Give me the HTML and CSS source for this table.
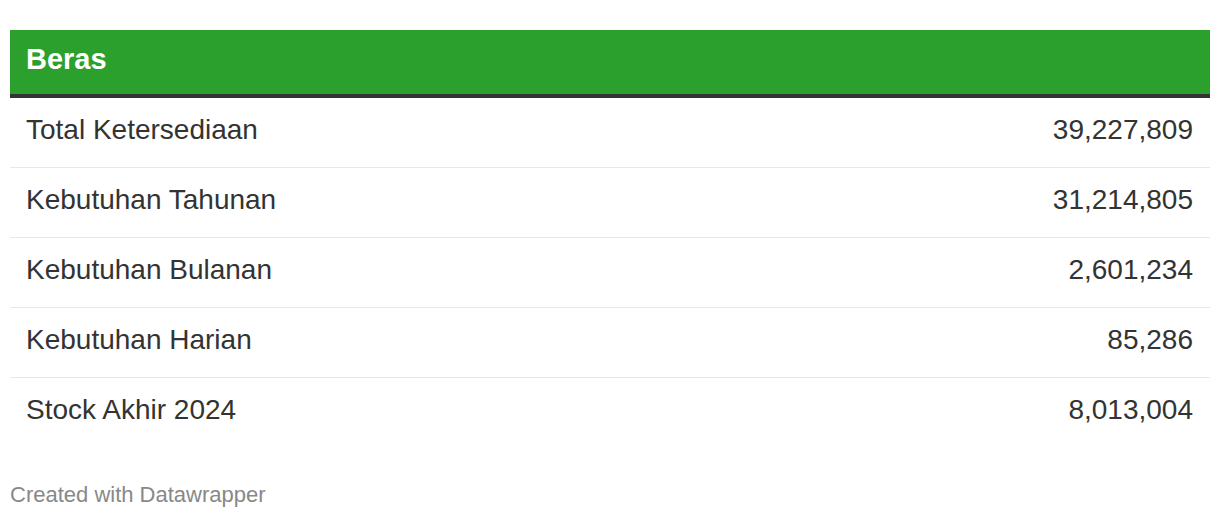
FILE: index.html
```html
<!DOCTYPE html>
<html>
<head>
<meta charset="utf-8">
<link rel="stylesheet" href="styles.css">
</head>
<body>
<div class="chart">
  <div class="table">
    <div class="head">Beras</div>
    <div class="row"><span>Total Ketersediaan</span><span>39,227,809</span></div>
    <div class="row"><span>Kebutuhan Tahunan</span><span>31,214,805</span></div>
    <div class="row"><span>Kebutuhan Bulanan</span><span>2,601,234</span></div>
    <div class="row"><span>Kebutuhan Harian</span><span>85,286</span></div>
    <div class="row last"><span>Stock Akhir 2024</span><span>8,013,004</span></div>
  </div>
  <div class="footer">Created with Datawrapper</div>
</div>
</body>
</html>
```
FILE: styles.css
```css
html, body {
  margin: 0;
  padding: 0;
  background: #fff;
}
.chart {
  padding: 30px 10px 0;
  font-family: "Liberation Sans", Arial, sans-serif;
  color: #333;
}
.table {
  display: flex;
  flex-direction: column;
}
.head {
  background: #2ca02c;
  color: #fff;
  font-weight: bold;
  font-size: 29px;
  height: 64px;
  line-height: 58px;
  padding: 0 16px;
  border-bottom: 4px solid #333;
}
.row {
  display: flex;
  justify-content: space-between;
  align-items: center;
  height: 63px;
  box-sizing: content-box;
  padding: 0 17px 6px 16px;
  border-bottom: 1px solid #e8e8e8;
  font-size: 28px;
  line-height: 1;
}
.row.last {
  border-bottom: none;
}
.footer {
  margin-top: 35px;
  font-size: 22px;
  color: #888;
}
```
